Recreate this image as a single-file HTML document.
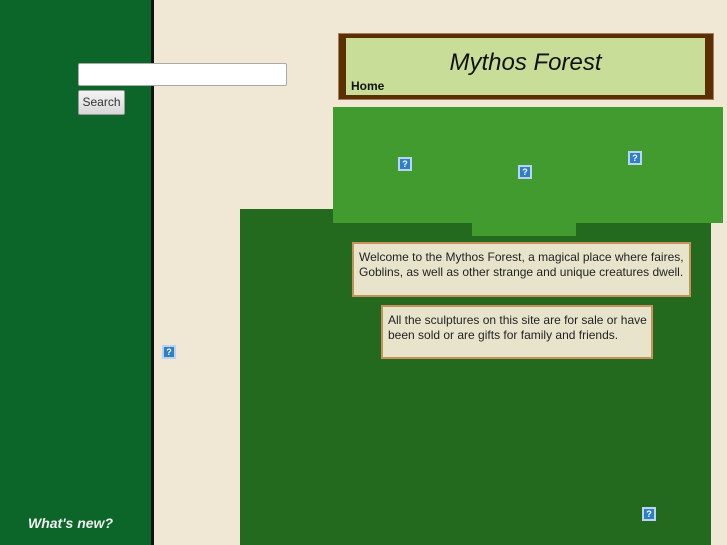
<!DOCTYPE html>
<html><head><style>
body{margin:0;width:727px;height:545px;background:#f0e8d4;position:relative;overflow:hidden;font-family:"Liberation Sans",sans-serif}
div{position:absolute;box-sizing:border-box}
.q{width:14px;height:14px;background:#2e7fc8;border:2px solid #b8d4ee;color:#fff;font-size:9px;font-weight:bold;text-align:center;line-height:10px}
.box{background:#e8e4cc;border:2px solid #c8905a;font-size:12px;color:#222;line-height:15px}
</style></head><body>
<div style="left:0;top:0;width:151px;height:545px;background:#0d6629"></div>
<div style="left:151px;top:0;width:3px;height:545px;background:#111"></div>
<div style="left:78px;top:63px;width:209px;height:23px;background:#fff;border:1px solid #aaa;border-radius:2px"></div>
<div style="left:78px;top:90px;width:47px;height:25px;background:linear-gradient(#f4f4f4,#d8d8d8);border:1px solid #999;border-radius:2px;font-size:12px;color:#333;text-align:center;line-height:23px">Search</div>
<div style="left:28px;top:515px;color:#eee;font-size:14px;font-weight:bold;font-style:italic">What's new?</div>
<div class="q" style="left:162px;top:345px">?</div>
<div style="left:240px;top:209px;width:471px;height:336px;background:#236a1e"></div>
<div style="left:338px;top:33px;width:376px;height:67px;background:#5c2f00;border:1px solid #a08060"></div>
<div style="left:346px;top:38px;width:359px;height:57px;background:#c8de98"></div>
<div style="left:346px;top:49px;width:359px;text-align:center;font-size:24px;font-style:italic;color:#111">Mythos Forest</div>
<div style="left:351px;top:79px;font-size:12px;font-weight:bold;color:#111">Home</div>
<div style="left:333px;top:107px;width:390px;height:116px;background:#419b2e"></div>
<div style="left:472px;top:222px;width:104px;height:14px;background:#419b2e"></div>
<div class="q" style="left:398px;top:157px">?</div>
<div class="q" style="left:518px;top:165px">?</div>
<div class="q" style="left:628px;top:151px">?</div>
<div class="q" style="left:642px;top:507px">?</div>
<div class="box" style="left:352px;top:242px;width:339px;height:55px;padding:6px 0 0 5px">Welcome to the Mythos Forest, a magical place where faires, Goblins, as well as other strange and unique creatures dwell.</div>
<div class="box" style="left:381px;top:305px;width:272px;height:54px;padding:6px 0 0 5px">All the sculptures on this site are for sale or have been sold or are gifts for family and friends.</div>
</body></html>
